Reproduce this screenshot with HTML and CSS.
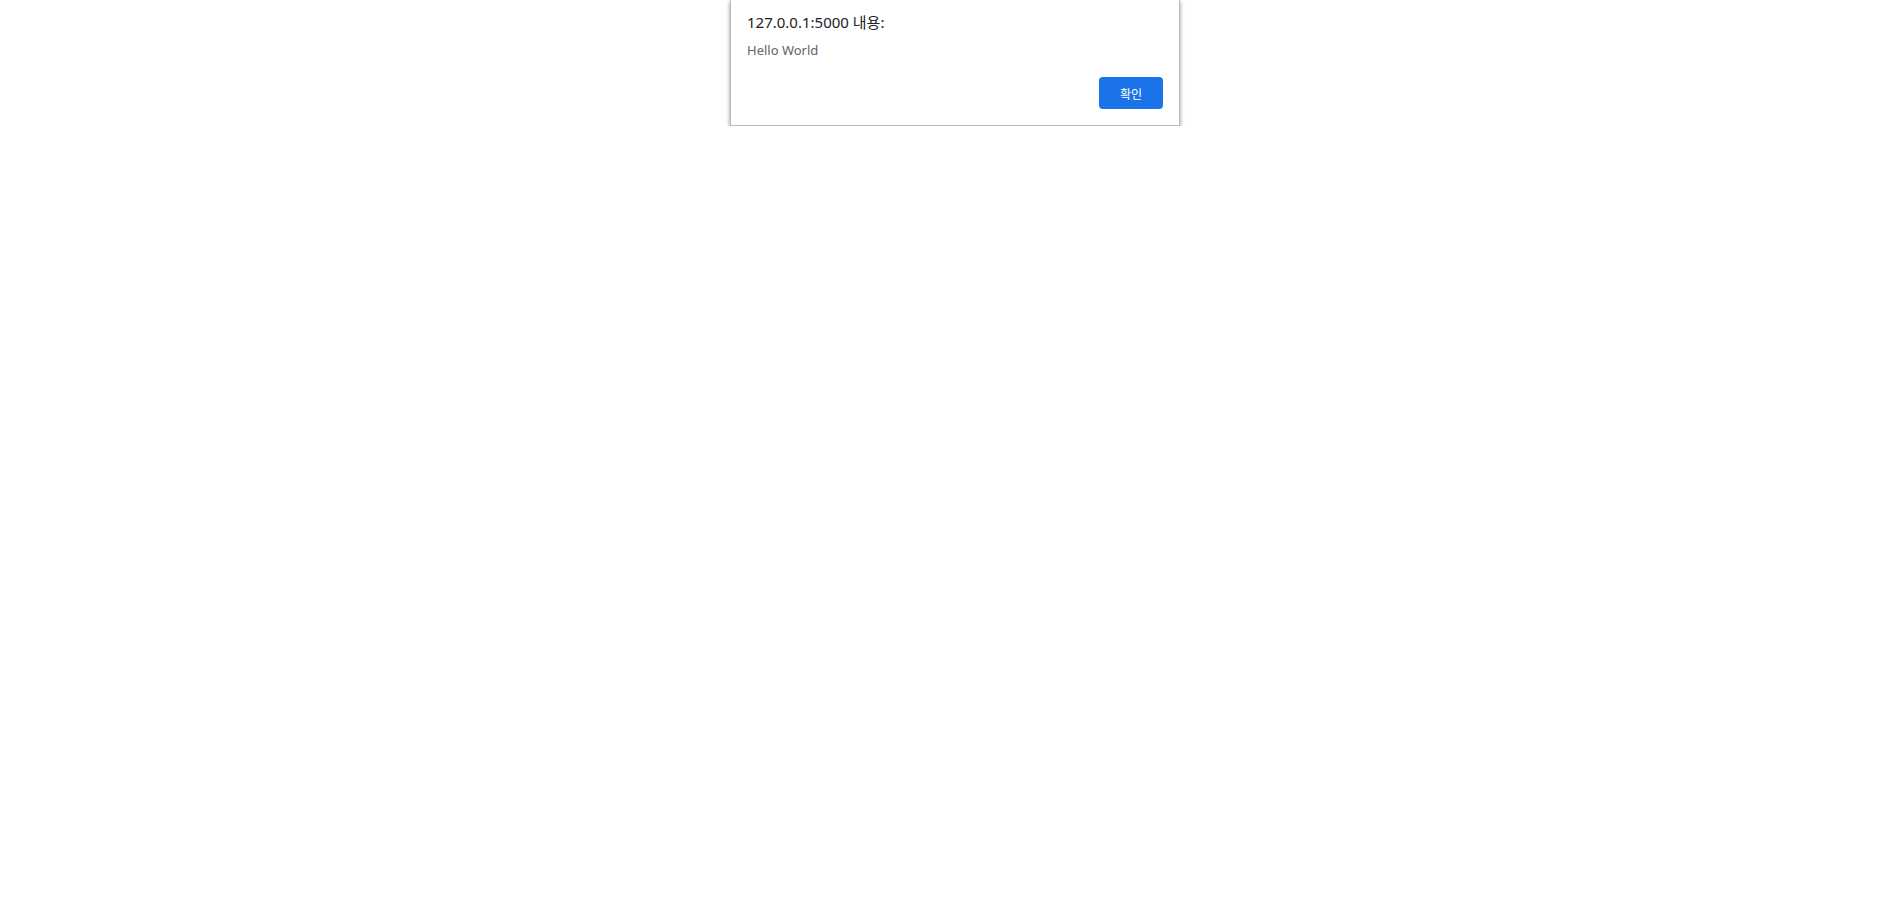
FILE: index.html
```html
<!DOCTYPE html>
<html lang="ko">
  <head>
    <meta charset="UTF-8" />
    <meta name="viewport" content="width=device-width, initial-scale=1.0" />
    <title>Alert</title>
    <link rel="stylesheet" href="styles.css">
  </head>
  <body>
    <div class="alert-wrap">
      <div class="alert-box">
        <div class="alert-title">127.0.0.1:5000 내용:</div>
        <div class="alert-message">Hello World</div>
        <div class="alert-actions">
          <button class="alert-ok">확인</button>
        </div>
      </div>
    </div>
  </body>
</html>
```

FILE: styles.css
```css
body {
  margin: 0;
  background: #fff;
  font-family: "Noto Sans", "Noto Sans CJK KR", sans-serif;
}
.alert-wrap {
  display: flex;
  justify-content: center;
  padding-left: 6px;
}
.alert-box {
  width: 450px;
  box-sizing: border-box;
  background: #fff;
  border: 1px solid #bdbdbd;
  border-top: none;
  box-shadow: 0px 2px 4px rgba(0, 0, 0, 0.45);
  padding: 12px 16px 16px 16px;
}
.alert-title {
  font-size: 15px;
  line-height: 20px;
  color: #202124;
}
.alert-message {
  font-size: 13px;
  line-height: 18px;
  color: #5f6368;
  margin-top: 9px;
}
.alert-actions {
  display: flex;
  justify-content: flex-end;
  margin-top: 18px;
}
.alert-ok {
  width: 64px;
  height: 32px;
  border: none;
  border-radius: 4px;
  background: #1a73e8;
  color: #fff;
  font-family: "Noto Sans CJK KR", sans-serif;
  font-size: 12px;
  cursor: pointer;
}
```
